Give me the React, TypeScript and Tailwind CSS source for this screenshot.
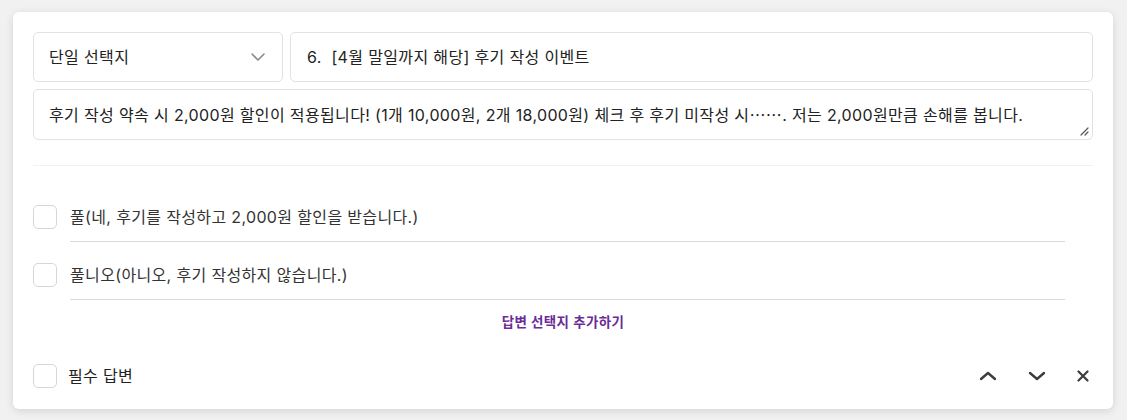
import React from 'react'

const FONT = '"Inter", "Noto Sans CJK KR", "Noto Sans", sans-serif'
const CJK = '"Noto Sans CJK KR", sans-serif'

const Checkbox = () => (
  <span className="block h-6 w-6 shrink-0 rounded-[5px] border border-[#d6d6d6] bg-white" />
)

const ChoiceItem = ({ label }: { label: string }) => (
  <div className="flex items-start gap-[13px] pt-[21px]">
    <Checkbox />
    <div className="mr-[28px] flex-1 border-b border-[#d9d9d9] pb-3">
      <p className="h-6 text-[16px] leading-6 text-[#333]">{label}</p>
    </div>
  </div>
)

const Chevron = ({ up }: { up?: boolean }) => (
  <svg width="18" height="10" viewBox="0 0 18 10" fill="none">
    <path
      d={up ? 'M2 8L9 2L16 8' : 'M2 2L9 8L16 2'}
      stroke="#3d3d3d"
      strokeWidth="2.4"
      strokeLinecap="round"
      strokeLinejoin="round"
    />
  </svg>
)

const choices = [
  '풀(네, 후기를 작성하고 2,000원 할인을 받습니다.)',
  '풀니오(아니오, 후기 작성하지 않습니다.)',
]

export default function App() {
  return (
    <div className="min-h-[420px] bg-[#f1f1f1] px-[13px] pt-3 tracking-[0.35px]" style={{ fontFamily: FONT }}>
      <div className="w-[1100px] rounded-md bg-white px-5 pb-[21px] pt-5 shadow-[0_2px_8px_rgba(0,0,0,0.12)]">
        <div className="flex gap-[7px]">
          <div className="flex h-[50px] w-[250px] items-center justify-between rounded-[5px] border border-[#e2e2e2] pl-[15px] pr-[17px]">
            <span className="text-[16px] text-[#222]">단일 선택지</span>
            <svg width="14" height="8" viewBox="0 0 14 8" fill="none">
              <path d="M1 1L7 7L13 1" stroke="#8a8a8a" strokeWidth="1.6" strokeLinecap="round" strokeLinejoin="round" />
            </svg>
          </div>
          <div className="flex h-[50px] flex-1 items-center rounded-[5px] border border-[#e2e2e2] px-4">
            <span className="whitespace-pre text-[16px] text-[#222]">6.  [4월 말일까지 해당] 후기 작성 이벤트</span>
          </div>
        </div>
        {/* textarea body, with the CJK ellipsis kept at mid height */}
        <div className="relative mt-[7px] h-[51px] w-full rounded-[5px] border border-[#e2e2e2] px-[15px] pt-[12px] text-[16px] leading-6 text-[#222]">
          후기 작성 약속 시 2,000원 할인이 적용됩니다! (1개 10,000원, 2개 18,000원) 체크 후 후기 미작성 시
          <span style={{ fontFamily: CJK }}>……</span>. 저는 2,000원만큼 손해를 봅니다.
          <svg className="absolute bottom-[3px] right-[3px]" width="9" height="9" viewBox="0 0 9 9" fill="none">
            <path d="M8 1L1 8M8 5L5 8" stroke="#555" strokeWidth="1.2" strokeLinecap="round" />
          </svg>
        </div>
        <div className="mt-[25px] h-px bg-[#f2f2f2]" />
        <div className="mt-[18px]">
          {choices.map((c) => (
            <ChoiceItem key={c} label={c} />
          ))}
        </div>
        <p className="mt-[13px] text-center text-[13.5px] font-semibold leading-[18px] text-[#6a2c97]">답변 선택지 추가하기</p>
        <div className="mt-[33px] flex items-center">
          <Checkbox />
          <span className="ml-[11px] text-[16px] text-[#222]">필수 답변</span>
          <div className="ml-auto flex items-center gap-[31px] pr-1">
            <Chevron up />
            <Chevron />
            <svg width="12" height="12" viewBox="0 0 12 12" fill="none">
              <path d="M1.5 1.5L10.5 10.5M10.5 1.5L1.5 10.5" stroke="#3d3d3d" strokeWidth="2.2" strokeLinecap="round" />
            </svg>
          </div>
        </div>
      </div>
    </div>
  )
}
